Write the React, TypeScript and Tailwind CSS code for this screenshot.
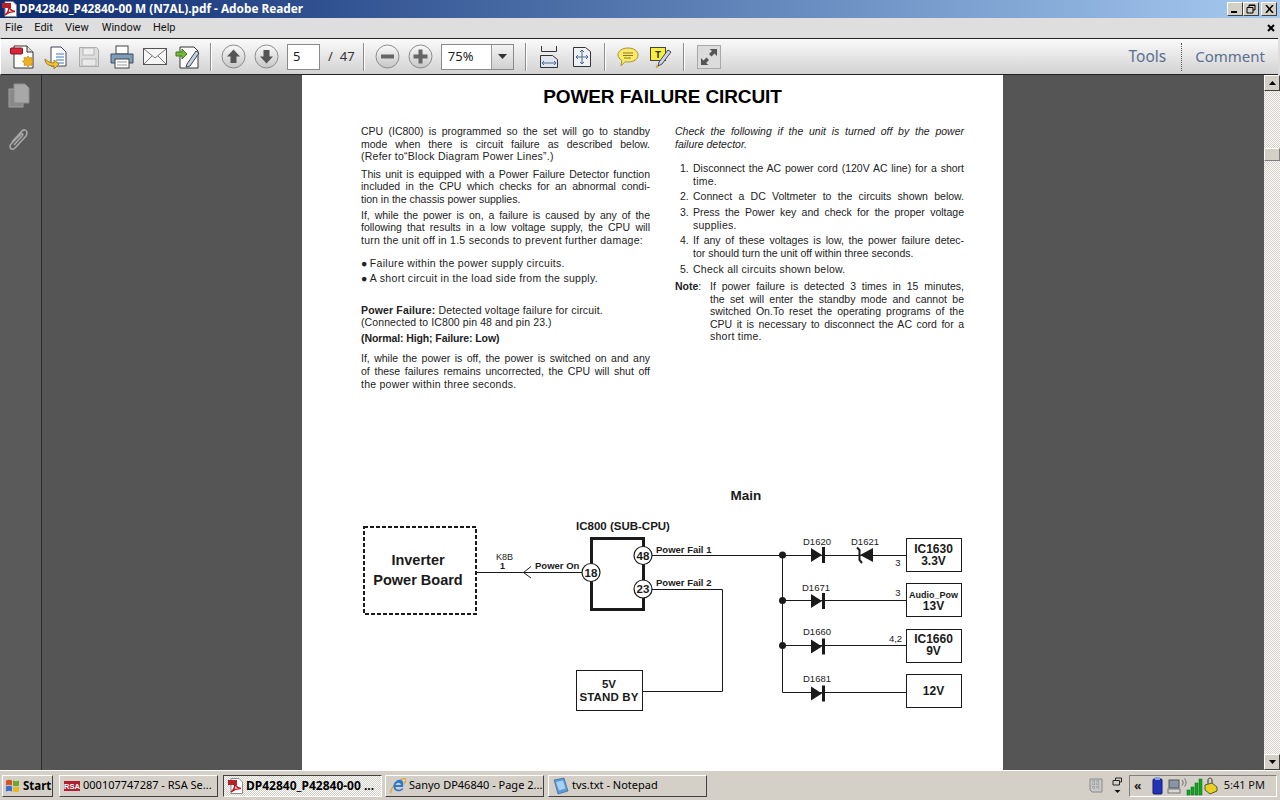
import React from 'react';

const ui = 'font-["Noto_Sans",sans-serif]';

// ---- small icons ----
const PdfIcon = ({ size = 16 }: { size?: number }) => (
  <svg width={size} height={size} viewBox="0 0 16 16">
    <path d="M3 .5h8l3.5 3.5v11.5H3z" fill="#fff" stroke="#8a8a8a" />
    <rect x="0" y="2" width="9" height="5" fill="#b8202a" />
    <path d="M3 14c3-2 4-6 3.5-9 1 3 2.500 5 6.500 5.500-3-.2-7 1-10 3.500z" fill="none" stroke="#c4161c" strokeWidth="1.400" />
  </svg>
);

const NewDoc = () => (
  <svg width="26" height="26" viewBox="0 0 26 26">
    <path d="M4 2h13l6 6v16H4z" fill="#fff" stroke="#333" />
    <path d="M17 2v6h6" fill="#ddd" stroke="#333" />
    <rect x="0.500" y="4" width="12" height="6" rx="1" fill="#d8253a" stroke="#8a1020" />
    <path d="M18 12l1.500 2 2.500-.5-.5 2.500 2 1.500-2 1.500.5 2.500-2.500-.5-1.500 2-1.500-2-2.500.5.5-2.500-2-1.500 2-1.500-.5-2.500 2.500.5z" fill="#f0b020" stroke="#b07a10" strokeWidth=".6" />
  </svg>
);

const OpenDoc = () => (
  <svg width="26" height="26" viewBox="0 0 26 26">
    <path d="M8 3h10l5 5v14H8z" fill="#fff" stroke="#445" />
    <path d="M13 10h8M13 13h8M13 16h8M13 19h8" stroke="#3a78c8" />
    <path d="M2 15c0 5 4 7 9 7v3l5-5-5-4v3c-3 0-6-1-9-4z" fill="#f0c040" stroke="#a87c10" />
  </svg>
);

const SaveIcon = () => (
  <svg width="22" height="22" viewBox="0 0 22 22">
    <path d="M1.500 1.500h17l2 2v17h-19z" fill="#ddd" stroke="#aaa" />
    <rect x="5" y="2" width="11" height="7" fill="#efefef" stroke="#b5b5b5" />
    <rect x="4" y="13" width="14" height="7" fill="#e9e9e9" stroke="#b5b5b5" />
  </svg>
);

const PrintIcon = () => (
  <svg width="24" height="24" viewBox="0 0 24 24">
    <rect x="6" y="1" width="12" height="8" fill="#fff" stroke="#444" />
    <path d="M1 9h22v9H1z" fill="#7f9cb8" stroke="#3c4f63" />
    <rect x="5" y="14" width="14" height="9" fill="#fff" stroke="#444" />
    <path d="M7 17h10M7 20h10" stroke="#999" />
  </svg>
);

const MailIcon = () => (
  <svg width="24" height="18" viewBox="0 0 24 18">
    <rect x=".5" y=".5" width="23" height="16" fill="#f6f6f6" stroke="#555" />
    <path d="M1 1l11 9 11-9M1 16l8-8M23 16l-8-8" fill="none" stroke="#777" />
  </svg>
);

const SignIcon = () => (
  <svg width="26" height="24" viewBox="0 0 26 24">
    <path d="M5 2h14l4 4v17H5z" fill="#fff" stroke="#333" />
    <path d="M1 7h6V4l5 5-5 5v-3H1z" fill="#72b83c" stroke="#3f7a18" />
    <path d="M12 19l9-13 3 2-9 13-4 1z" fill="#c4d2e0" stroke="#445" />
  </svg>
);

const CircleBtn = ({ children }: { children: React.ReactNode }) => (
  <svg width="25" height="25" viewBox="0 0 25 25">
    <defs>
      <linearGradient id="cb" x1="0" y1="0" x2="0" y2="1">
        <stop offset="0" stopColor="#fafafa" />
        <stop offset="1" stopColor="#c6c6c6" />
      </linearGradient>
    </defs>
    <circle cx="12.500" cy="12.500" r="11.500" fill="url(#cb)" stroke="#8c8c8c" />
    {children}
  </svg>
);

const FitWidth = () => (
  <svg width="18" height="22" viewBox="0 0 18 22">
    <path d="M1.500 0v5.500h15V0" fill="none" stroke="#333" />
    <path d="M.5 9.500h12l5 4v8H.5z" fill="#dfe6ef" stroke="#333" />
    <path d="M2 17h14M2 17l2-2M2 17l2 2M16 17l-2-2M16 17l-2 2" stroke="#4a6a90" fill="none" />
  </svg>
);

const FitPage = () => (
  <svg width="18" height="20" viewBox="0 0 18 20">
    <path d="M.5.500h12l5 4v15H.5z" fill="#eef1f5" stroke="#333" />
    <path d="M9 3v14M3 10h12M9 3L7 5M9 3l2 2M9 17l-2-2M9 17l2-2M3 10l2-2M3 10l2 2M15 10l-2-2M15 10l-2 2" stroke="#4a6a90" fill="none" />
  </svg>
);

const CommentIcon = () => (
  <svg width="22" height="20" viewBox="0 0 22 20">
    <path d="M11 1c6 0 10 3 10 7s-4 7-10 7c-1 0-2 0-3-.3L4 19l.8-5.500C2.500 12 1 10 1 8c0-4 4-7 10-7z" fill="#fbe96a" stroke="#a89430" />
    <path d="M6 6h10M6 8.500h10M7 11h7" stroke="#8a7a20" />
  </svg>
);

const NoteIcon = () => (
  <svg width="22" height="22" viewBox="0 0 22 22">
    <rect x=".5" y="1.500" width="15" height="13" fill="#f8ee40" stroke="#444" />
    <text x="8" y="12" textAnchor="middle" fontSize="10" fontWeight="700" fontFamily="Liberation Mono, monospace" fill="#333">T</text>
    <path d="M9 16l9-12 3 2-9 12-4 2z" fill="#ccd6e0" stroke="#445" />
    <path d="M8 20l-2 1" stroke="#d8a020" strokeWidth="2" />
  </svg>
);

const FullScreen = () => (
  <div className="w-[24px] h-[24px] border border-[#a8a8a8] bg-[#dcdcdc] flex items-center justify-center">
    <svg width="20" height="20" viewBox="0 0 20 20">
      <path d="M18 2v7l-2.500-2.500-3 3-2.500-2.500 3-3L10.500 2z" fill="#555" />
      <path d="M2 18v-7l2.500 2.500 3-3 2.500 2.500-3 3L9.500 18z" fill="#555" />
    </svg>
  </div>
);

const Slot = ({ children, className = '' }: { children: React.ReactNode; className?: string }) => (
  <div className={`w-[33px] h-full flex items-center justify-center shrink-0 ${className}`}>{children}</div>
);

const Sep = () => (
  <div className="w-[13px] h-full flex items-center justify-center shrink-0">
    <div className="w-px h-[28px] bg-[#8c8c8c] border-r border-white box-content" />
  </div>
);

// ---- window chrome ----
const WinBtn = ({ children, className = '' }: { children: React.ReactNode; className?: string }) => (
  <div className={`w-[16px] h-[14px] bg-[#d4d0c8] border border-t-white border-l-white border-b-[#404040] border-r-[#404040] flex items-center justify-center ${className}`}>
    {children}
  </div>
);

const TitleBar = () => (
  <div className={`h-[18px] shrink-0 flex items-center bg-linear-to-r from-[#0f2a70] to-[#a6caf0] ${ui}`}>
    <div className="w-[19px] pl-[2px] flex items-center"><PdfIcon /></div>
    <span className="text-white font-bold text-[11.800px] leading-none whitespace-nowrap">DP42840_P42840-00 M (N7AL).pdf - Adobe Reader</span>
    <div className="ml-auto flex items-center pr-[3px]">
      <WinBtn>
        <div className="w-[6px] h-[2px] bg-black mt-[6px] mr-[2px]" />
      </WinBtn>
      <WinBtn>
        <svg width="10" height="10" viewBox="0 0 10 10"><path d="M3 3V1h6v5H7M1 3.500h6V9H1z" fill="none" stroke="#000" /><path d="M3 1.500h6M1 3.500h6" stroke="#000" /></svg>
      </WinBtn>
      <WinBtn className="ml-[2px]">
        <svg width="9" height="8" viewBox="0 0 9 8"><path d="M1 0l7 8M8 0L1 8" stroke="#000" strokeWidth="1.500" /></svg>
      </WinBtn>
    </div>
  </div>
);

const MenuBar = () => (
  <div className='h-[20px] shrink-0 bg-[#dedede] flex items-center pl-[5px] pr-[5px] text-[11px] text-[#111] font-["Roboto",sans-serif]'>
    <span>File</span>
    <span className="ml-[12px]">Edit</span>
    <span className="ml-[12px]">View</span>
    <span className="ml-[13px]">Window</span>
    <span className="ml-[12px]">Help</span>
    <svg className="ml-auto" width="8" height="8" viewBox="0 0 8 8"><path d="M1 1l6 6M7 1L1 7" stroke="#000" strokeWidth="2" /></svg>
  </div>
);

const Toolbar = () => (
  <div className={`h-[37px] shrink-0 flex items-center pl-[5px] mr-[2px] border-y border-[#222] bg-linear-to-b from-[#fafafa] to-[#d2d2d2] border-l border-l-white ${ui}`}>
    <Slot><NewDoc /></Slot>
    <Slot><OpenDoc /></Slot>
    <Slot><SaveIcon /></Slot>
    <Slot><PrintIcon /></Slot>
    <Slot><MailIcon /></Slot>
    <Slot><SignIcon /></Slot>
    <Sep />
    <Slot>
      <CircleBtn><path d="M12.500 5.500l6.500 7h-3.500V19h-6v-6.500H6z" fill="#555" /></CircleBtn>
    </Slot>
    <Slot>
      <CircleBtn><path d="M12.500 19.500l6.500-7h-3.500V6h-6v6.500H6z" fill="#555" /></CircleBtn>
    </Slot>
    <div className="ml-[4px] w-[33px] h-[26px] bg-white border border-[#8a8a8a] flex items-center pl-[5px] text-[13px] text-[#222] shrink-0">5</div>
    <span className="ml-[8px] text-[13px] text-[#333]">/</span>
    <span className="ml-[7px] w-[18px] text-[13px] text-[#333]">47</span>
    <Sep />
    <Slot>
      <CircleBtn><rect x="6" y="10.500" width="13" height="4" fill="#666" /></CircleBtn>
    </Slot>
    <Slot>
      <CircleBtn><path d="M10.500 5.500h4v5h5v4h-5v5h-4v-5h-5v-4h5z" fill="#666" /></CircleBtn>
    </Slot>
    <div className="ml-[4px] w-[73px] h-[26px] bg-white border border-[#8a8a8a] flex items-center text-[13px] text-[#222] shrink-0">
      <span className="flex-1 pl-[6px]">75%</span>
      <div className="w-[22px] h-full bg-linear-to-b from-[#f4f4f4] to-[#d0d0d0] border-l border-[#9a9a9a] flex items-center justify-center">
        <svg width="9" height="5" viewBox="0 0 9 5"><path d="M0 0h9L4.500 5z" fill="#333" /></svg>
      </div>
    </div>
    <div className="ml-[6px] h-full"><Sep /></div>
    <Slot><FitWidth /></Slot>
    <Slot><FitPage /></Slot>
    <Sep />
    <Slot><CommentIcon /></Slot>
    <Slot><NoteIcon /></Slot>
    <Sep />
    <Slot className="ml-[2px]"><FullScreen /></Slot>
    <div className="ml-auto flex items-center h-full text-[15px] text-[#5b6f8f]">
      <span className="text-[15.500px]">Tools</span>
      <div className="ml-[15px] mr-[13px] h-[28px] border-l border-dotted border-[#555]" />
      <span className="pr-[13px]">Comment</span>
    </div>
  </div>
);

// ---- document page ----
const just = '[text-align-last:justify]';

const Para = ({ lines, className = '', italic = false, track = true, full = false }: { lines: string[]; className?: string; italic?: boolean; track?: boolean; full?: boolean }) => (
  <div className={`${className} ${italic ? 'italic' : ''}`}>
    {lines.map((l, i) => {
      const isLast = i === lines.length - 1;
      return (
        <div key={i} className={!isLast || full ? `${just} whitespace-nowrap` : track ? 'whitespace-nowrap tracking-[0.25px]' : 'whitespace-nowrap'}>{l}</div>
      );
    })}
  </div>
);

const Step = ({ n, lines, className = '', track = true, full = false }: { n: string; lines: string[]; className?: string; track?: boolean; full?: boolean }) => (
  <div className={`flex ${className}`}>
    <span className="w-[18px] pl-[5px] shrink-0">{n}</span>
    <Para lines={lines} className="flex-1" track={track} full={full} />
  </div>
);

const LeftColumn = () => (
  <div>
    <Para lines={['CPU (IC800) is programmed so the set will go to standby', 'mode when there is circuit failure as described below.', '(Refer to“Block Diagram Power Lines”.)']} />
    <Para className="mt-[5px]" track={false} lines={['This unit is equipped with a Power Failure Detector function', 'included in the CPU which checks for an abnormal condi-', 'tion in the chassis power supplies.']} />
    <Para className="mt-[3px]" lines={['If, while the power is on, a failure is caused by any of the', 'following that results in a low voltage supply, the CPU will', 'turn the unit off in 1.5 seconds to prevent further damage:']} />
    <div className="mt-[11px] tracking-[0.3px]">● <span className="-ml-[1px]">Failure within the power supply circuits.</span></div>
    <div className="mt-[2px] tracking-[0.3px]">● <span className="-ml-[1px]">A short circuit in the load side from the supply.</span></div>
    <div className="mt-[19px] tracking-[0.15px]"><b>Power Failure:</b> Detected voltage failure for circuit.</div>
    <div className="tracking-[0.1px]">(Connected to IC800 pin 48 and pin 23.)</div>
    <div className="mt-[3px] font-bold -tracking-[0.1px]">(Normal: High; Failure: Low)</div>
    <Para className="mt-[8px]" lines={['If, while the power is off, the power is switched on and any', 'of these failures remains uncorrected, the CPU will shut off', 'the power within three seconds.']} />
  </div>
);

const RightColumn = () => (
  <div>
    <Para italic track={false} lines={['Check the following if the unit is turned off by the power', 'failure detector.']} />
    <Step className="mt-[12px]" n="1." lines={['Disconnect the AC power cord (120V AC line) for a short', 'time.']} />
    <Step className="mt-[3px]" n="2." full lines={['Connect a DC Voltmeter to the circuits shown below.']} />
    <Step className="mt-[3px]" n="3." lines={['Press the Power key and check for the proper voltage', 'supplies.']} />
    <Step className="mt-[3px]" n="4." track={false} lines={['If any of these voltages is low,  the power failure detec-', 'tor should turn the unit off within three seconds.']} />
    <Step className="mt-[4px]" n="5." lines={['Check all circuits shown below.']} />
    <div className="flex mt-[4px]">
      <span className="w-[35px] shrink-0"><b>Note</b>:</span>
      <Para className="flex-1" lines={['If power failure is detected 3 times in 15 minutes,', 'the set will enter the standby mode and cannot be', 'switched On.To reset the operating programs of the', 'CPU it is necessary to disconnect the AC cord for a', 'short time.']} />
    </div>
  </div>
);

const Diode = ({ y }: { y: number }) => (
  <g>
    <path d={`M811 ${y - 7}L822 ${y}L811 ${y + 7}z`} fill="#1a1a1a" />
    <path d={`M823.500 ${y - 8}v16`} stroke="#1a1a1a" strokeWidth="3" />
  </g>
);

const Pin = ({ x, y, label }: { x: number; y: number; label: string }) => (
  <g>
    <circle cx={x} cy={y} r="9" fill="#fff" stroke="#1a1a1a" strokeWidth="1.200" />
    <text x={x} y={y + 4} textAnchor="middle" fontSize="11.500" fontWeight="700">{label}</text>
  </g>
);

const Diagram = () => (
  <svg className="block h-[290px] w-[701px] text-[#1a1a1a]" viewBox="302 480 701 290" fontFamily="Liberation Sans, Arial, sans-serif" fill="#1a1a1a">
    <text x="746" y="499.500" textAnchor="middle" fontSize="13.500" fontWeight="700">Main</text>

    <rect x="364" y="527" width="112" height="87" fill="none" stroke="#1a1a1a" strokeWidth="2" strokeDasharray="4 2" />
    <text x="418" y="565" textAnchor="middle" fontSize="14.500" fontWeight="700">Inverter</text>
    <text x="418" y="585" textAnchor="middle" fontSize="14.500" fontWeight="700">Power Board</text>
    <path d="M476 572.500H582" stroke="#1a1a1a" fill="none" />
    <path d="M531 566.500L523.500 572.500L531 578" stroke="#1a1a1a" fill="none" />
    <text x="504.500" y="560" textAnchor="middle" fontSize="9">K8B</text>
    <text x="502.500" y="569" textAnchor="middle" fontSize="9" fontWeight="700">1</text>
    <text x="535" y="569" fontSize="9.500" fontWeight="700">Power On</text>

    <text x="576" y="530" fontSize="11.500" fontWeight="700">IC800 (SUB-CPU)</text>
    <rect x="591.500" y="538.500" width="52" height="71" fill="none" stroke="#1a1a1a" strokeWidth="3" />
    <Pin x={591} y={572.500} label="18" />
    <Pin x={643} y={555.500} label="48" />
    <Pin x={643} y={589} label="23" />
    <text x="656" y="552.500" fontSize="9.500" fontWeight="700">Power Fail 1</text>
    <text x="656" y="585.500" fontSize="9.500" fontWeight="700">Power Fail 2</text>
    <path d="M652 555.500H906.500" stroke="#1a1a1a" fill="none" />
    <path d="M652 589.500H722.500V691.500H642" stroke="#1a1a1a" fill="none" />

    <rect x="576.500" y="670.500" width="66" height="40" fill="#fff" stroke="#1a1a1a" />
    <text x="609" y="688" textAnchor="middle" fontSize="11.500" fontWeight="700">5V</text>
    <text x="609" y="700.500" textAnchor="middle" fontSize="11.500" letterSpacing=".15" fontWeight="700">STAND BY</text>

    <path d="M782.500 555v137.500H906.500M782 600.500H906.500M782 645.500H906.500" stroke="#1a1a1a" fill="none" />
    <circle cx="782.500" cy="555" r="3.500" />
    <circle cx="782.500" cy="600.500" r="3.500" />
    <circle cx="782.500" cy="645.500" r="3.500" />

    <Diode y={555} />
    <Diode y={601} />
    <Diode y={646.500} />
    <Diode y={693.500} />
    <path d="M860 555L873 548V562z" fill="#1a1a1a" />
    <path d="M857 547.500l2.500 2.500v10l2.500 3" stroke="#1a1a1a" strokeWidth="2" fill="none" />

    <text x="817" y="544.500" textAnchor="middle" fontSize="9.500">D1620</text>
    <text x="865" y="544.500" textAnchor="middle" fontSize="9.500">D1621</text>
    <text x="816" y="591" textAnchor="middle" fontSize="9.500">D1671</text>
    <text x="817" y="635" textAnchor="middle" fontSize="9.500">D1660</text>
    <text x="817" y="682" textAnchor="middle" fontSize="9.500">D1681</text>
    <text x="898" y="566" textAnchor="middle" fontSize="9.500">3</text>
    <text x="898" y="596" textAnchor="middle" fontSize="9.500">3</text>
    <text x="895.500" y="642" textAnchor="middle" fontSize="9.500">4,2</text>

    <rect x="906.500" y="538.500" width="55" height="33" fill="#fff" stroke="#1a1a1a" />
    <rect x="906.500" y="583.500" width="55" height="33" fill="#fff" stroke="#1a1a1a" />
    <rect x="906.500" y="629.500" width="55" height="33" fill="#fff" stroke="#1a1a1a" />
    <rect x="906.500" y="674.500" width="55" height="33" fill="#fff" stroke="#1a1a1a" />
    <text x="933.500" y="553" textAnchor="middle" fontSize="12" fontWeight="700">IC1630</text>
    <text x="933.500" y="565" textAnchor="middle" fontSize="12" fontWeight="700">3.3V</text>
    <text x="933.500" y="598" textAnchor="middle" fontSize="9" fontWeight="700">Audio_Pow</text>
    <text x="933.500" y="610" textAnchor="middle" fontSize="12" fontWeight="700">13V</text>
    <text x="933.500" y="643" textAnchor="middle" fontSize="12" fontWeight="700">IC1660</text>
    <text x="933.500" y="655" textAnchor="middle" fontSize="12" fontWeight="700">9V</text>
    <text x="933.500" y="695" textAnchor="middle" fontSize="12" fontWeight="700">12V</text>
  </svg>
);

const Page = () => (
  <div className='ml-[260px] w-[701px] h-full overflow-hidden bg-white font-["Liberation_Sans",Arial,sans-serif] text-[#222]'>
    <div className="h-[50px] pl-[20px] pt-[10px] text-center text-[19px] leading-[24px] font-bold text-black -tracking-[0.1px]">POWER FAILURE CIRCUIT</div>
    <div className="h-[355px] pl-[59px] grid grid-cols-[289px_289px] gap-x-[25px] text-[10.500px] leading-[12.600px] items-start">
      <LeftColumn />
      <RightColumn />
    </div>
    <Diagram />
  </div>
);

const Scrollbar = () => (
  <div className="w-[16px] shrink-0 flex flex-col bg-[repeating-conic-gradient(#d4d0c8_0_25%,#ffffff_0_50%)] bg-size-[2px_2px]">
    <div className="h-[16px] bg-[#d4d0c8] border border-t-white border-l-white border-b-[#404040] border-r-[#404040] flex items-center justify-center">
      <svg width="7" height="4" viewBox="0 0 7 4"><path d="M3.500 0L7 4H0z" fill="#000" /></svg>
    </div>
    <div className="mt-[57px] h-[13px] bg-[#d4d0c8] border border-t-white border-l-white border-b-[#808080] border-r-[#808080]" />
    <div className="mt-auto h-[16px] bg-[#d4d0c8] border border-t-white border-l-white border-b-[#404040] border-r-[#404040] flex items-center justify-center">
      <svg width="7" height="4" viewBox="0 0 7 4"><path d="M0 0h7L3.500 4z" fill="#000" /></svg>
    </div>
  </div>
);

const NavPane = () => (
  <div className="w-[42px] shrink-0 bg-[#5a5a5a] border-r border-[#2e2e2e] flex flex-col items-center pt-[8px]">
    <svg width="24" height="26" viewBox="0 0 24 26" className="-ml-[2px]">
      <rect x="1" y="6" width="14" height="18" fill="#8a8a8a" stroke="#a0a0a0" />
      <path d="M6 1h11l4 4v15H6z" fill="#a8a8a8" stroke="#8c8c8c" />
    </svg>
    <svg width="24" height="26" viewBox="0 0 24 26" className="mt-[18px] -ml-[4px]">
      <path d="M5 15L15 4c2-2 5-1 5 2 0 1-.5 2-1 3L8 21c-2 2-5 1-5-1.500 0-1 .5-2 1.500-3L14 7c1-1 2.500 0 1.500 1.500L7 18" fill="none" stroke="#a8a8a8" strokeWidth="1.600" />
    </svg>
  </div>
);

// ---- taskbar ----
const TaskBtn = ({ icon, label, active = false, className = '' }: { icon: React.ReactNode; label: string; active?: boolean; className?: string }) => (
  <div
    className={
      active
        ? `w-[159px] h-[22px] flex items-center pl-[4px] gap-[2px] border border-t-[#404040] border-l-[#404040] border-b-white border-r-white bg-[repeating-conic-gradient(#d4d0c8_0_25%,#ffffff_0_50%)] bg-size-[2px_2px] font-bold text-[12px] text-black ${className}`
        : `w-[159px] h-[22px] flex items-center pl-[4px] gap-[3px] border border-t-white border-l-white border-b-[#404040] border-r-[#404040] bg-[#d4d0c8] text-black ${className}`
    }
  >
    {icon}
    <span className="whitespace-nowrap">{label}</span>
  </div>
);

const RsaIcon = () => (
  <svg width="16" height="10" viewBox="0 0 16 10">
    <rect width="16" height="10" fill="#b02030" />
    <text x="8" y="8" textAnchor="middle" fontSize="7.500" fontWeight="700" fill="#fff" fontFamily="Liberation Sans, sans-serif">RSA</text>
  </svg>
);

const IeIcon = () => (
  <svg width="16" height="16" viewBox="0 0 16 16">
    <path d="M1 15c-1-2 2-8 8-12 3-2 6-3 7-2 .6 1-.5 3-2 5" fill="none" stroke="#e0a020" strokeWidth="1.200" />
    <path d="M13 9H5.500c0 3 4 3.500 6 1.500h2c-2 4-9.500 4-10-1.500C3 4 9-.5 12.500 3c1 1.500.8 4 .5 6zM5.500 7H11c-.3-3-5-3-5.500 0z" fill="#2a78d0" />
  </svg>
);

const NotepadIcon = () => (
  <svg width="16" height="18" viewBox="0 0 16 18">
    <path d="M1 3l10-2 4 13-10 3z" fill="#5a9ad8" stroke="#2a5a90" strokeWidth=".6" />
    <path d="M3 5l7-1.500 2.500 8-6.500 2z" fill="#a8d0f0" />
  </svg>
);

const Taskbar = () => (
  <div className="h-[30px] shrink-0 bg-[#d4d0c8] border-t border-t-white flex items-center pl-[2px] pr-[3px] text-[11px] font-['Noto_Sans',sans-serif]">
    <div className="w-[51px] h-[22px] flex items-center pl-[2px] gap-[2px] font-bold text-[11.500px] border border-t-white border-l-white border-b-[#404040] border-r-[#404040]">
      <svg width="16" height="15" viewBox="0 0 16 15">
        <path d="M1 2.500c2-1 4-1 6 0v5c-2-1-4-1-6 0z" fill="#d8502a" />
        <path d="M8 2.500c2 1 4 1 6 0v5c-2 1-4 1-6 0z" fill="#6aa82a" />
        <path d="M1 8.500c2-1 4-1 6 0v5c-2-1-4-1-6 0z" fill="#3a6ed0" />
        <path d="M8 8.500c2 1 4 1 6 0v5c-2 1-4 1-6 0z" fill="#e8b820" />
      </svg>
      <span>Start</span>
    </div>
    <TaskBtn className="ml-[6px]" icon={<RsaIcon />} label="000107747287 - RSA Se..." />
    <TaskBtn className="ml-[5px]" active icon={<PdfIcon />} label="DP42840_P42840-00 ..." />
    <TaskBtn className="ml-[3px]" icon={<IeIcon />} label="Sanyo DP46840 - Page 2..." />
    <TaskBtn className="ml-[4px]" icon={<NotepadIcon />} label="tvs.txt - Notepad" />
    <div className="ml-auto flex items-center h-[22px]">
      <svg width="16" height="16" viewBox="0 0 16 16" className="mr-[8px]">
        <path d="M2 1h12v13H4l-2-2z" fill="#c8c8c8" stroke="#8a8a8a" />
        <path d="M4 3h8M4 6h8M4 9h8M6 2v10M10 2v10" stroke="#8a8a8a" strokeDasharray="1 1" />
      </svg>
      <svg width="11" height="18" viewBox="0 0 11 18" className="mr-[6px]">
        <path d="M3.500 3V1h6v4H8M1 3.500h6.500V8H1z" fill="none" stroke="#222" />
        <path d="M2.500 13h6l-3 3z" fill="#111" />
      </svg>
      <div className="w-[148px] h-[22px] flex items-center border border-t-[#808080] border-l-[#808080] border-b-white border-r-white">
        <span className="ml-[4px] w-[14px] font-bold text-[12px] leading-none text-[#222]">«</span>
        <svg width="72" height="20" viewBox="0 0 72 20" className="ml-[1px]">
          <rect x="4" y="3" width="9" height="15" rx="1" fill="#2233b8" stroke="#10186a" />
          <rect x="6" y="1" width="5" height="3" fill="#8aa0d8" />
          <rect x="20" y="4" width="10" height="8" fill="#8a96a8" stroke="#555" />
          <rect x="19" y="13" width="12" height="4" fill="#d8d8d8" stroke="#777" />
          <path d="M33 4c1.500 1.500 1.500 4 0 5.500M35.500 2.500c2 2.500 2 6 0 8" fill="none" stroke="#667" />
          <rect x="38" y="14" width="3" height="5" fill="#14a814" stroke="#063" strokeWidth=".5" />
          <rect x="42" y="11" width="3" height="8" fill="#14a814" stroke="#063" strokeWidth=".5" />
          <rect x="46" y="7" width="3" height="12" fill="#14a814" stroke="#063" strokeWidth=".5" />
          <rect x="50" y="3" width="3" height="16" fill="#14a814" stroke="#063" strokeWidth=".5" />
          <path d="M59 8V4c0-2.500 4-2.500 4 0v3" fill="none" stroke="#333" />
          <path d="M56 9l7-2 5 4v4l-7 3-5-4z" fill="#e8d020" stroke="#554" />
        </svg>
        <span className="ml-auto mr-[11px] text-[#111] whitespace-nowrap">5:41 PM</span>
      </div>
    </div>
  </div>
);

export default function App() {
  return (
    <div className="w-[1280px] h-[800px] overflow-hidden flex flex-col bg-[#dedede]">
      <TitleBar />
      <MenuBar />
      <Toolbar />
      <div className="flex-1 min-h-0 flex">
        <NavPane />
        <div className="flex-1 bg-[#555555] overflow-hidden">
          <Page />
        </div>
        <Scrollbar />
      </div>
      <Taskbar />
    </div>
  );
}
